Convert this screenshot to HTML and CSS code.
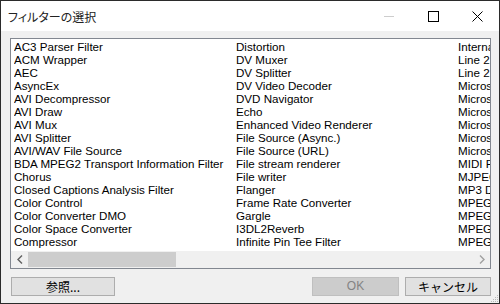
FILE: index.html
```html
<!DOCTYPE html>
<html lang="ja">
<head>
  <meta charset="UTF-8" />
  <title>フィルターの選択</title>
  <link rel="stylesheet" href="styles.css">
</head>
<body>

  <div class="window">
    <header class="titlebar">
      <span class="title">フィルターの選択</span>
      <div class="controls">
        <span class="ctl ctl-min"><i></i></span>
        <span class="ctl ctl-max"><i></i></span>
        <span class="ctl ctl-close">
          <svg width="11" height="11" viewBox="0 0 11 11">
            <path d="M0.5 0.5 L10.5 10.5 M10.5 0.5 L0.5 10.5" stroke="#000" stroke-width="1" fill="none" />
          </svg>
        </span>
      </div>
    </header>

    <main class="content">
      <div class="listbox">
        <div class="rows">
          <div class="col">
            <div>AC3 Parser Filter</div>
            <div>ACM Wrapper</div>
            <div>AEC</div>
            <div>AsyncEx</div>
            <div>AVI Decompressor</div>
            <div>AVI Draw</div>
            <div>AVI Mux</div>
            <div>AVI Splitter</div>
            <div>AVI/WAV File Source</div>
            <div>BDA MPEG2 Transport Information Filter</div>
            <div>Chorus</div>
            <div>Closed Captions Analysis Filter</div>
            <div>Color Control</div>
            <div>Color Converter DMO</div>
            <div>Color Space Converter</div>
            <div>Compressor</div>
          </div>
          <div class="col">
            <div>Distortion</div>
            <div>DV Muxer</div>
            <div>DV Splitter</div>
            <div>DV Video Decoder</div>
            <div>DVD Navigator</div>
            <div>Echo</div>
            <div>Enhanced Video Renderer</div>
            <div>File Source (Async.)</div>
            <div>File Source (URL)</div>
            <div>File stream renderer</div>
            <div>File writer</div>
            <div>Flanger</div>
            <div>Frame Rate Converter</div>
            <div>Gargle</div>
            <div>I3DL2Reverb</div>
            <div>Infinite Pin Tee Filter</div>
          </div>
          <div class="col col-last">
            <div>Internal Script Command Renderer</div>
            <div>Line 21 Decoder</div>
            <div>Line 21 Decoder 2</div>
            <div>Microsoft DTV-DVD Audio Decoder</div>
            <div>Microsoft DTV-DVD Video Decoder</div>
            <div>Microsoft MPEG-2 Audio Encoder</div>
            <div>Microsoft MPEG-2 Encoder</div>
            <div>Microsoft MPEG-2 Video Encoder</div>
            <div>Microsoft Screen Capture</div>
            <div>MIDI Parser</div>
            <div>MJPEG Decompressor</div>
            <div>MP3 Decoder DMO</div>
            <div>MPEG Audio Decoder</div>
            <div>MPEG Layer-3 Decoder</div>
            <div>MPEG-2 Demultiplexer</div>
            <div>MPEG-2 Splitter</div>
          </div>
        </div>

        <div class="hscroll">
          <span class="arrow">
            <svg width="6" height="9" viewBox="0 0 6 9">
              <path d="M5 0.5 L1 4.5 L5 8.5" stroke="#606060" stroke-width="1.4" fill="none" />
            </svg>
          </span>
          <div class="track">
            <div class="thumb"></div>
          </div>
          <span class="arrow">
            <svg width="6" height="9" viewBox="0 0 6 9">
              <path d="M1 0.5 L5 4.5 L1 8.5" stroke="#a0a0a0" stroke-width="1.4" fill="none" />
            </svg>
          </span>
        </div>
      </div>

      <div class="buttons">
        <button class="btn btn-browse">参照...</button>
        <span class="spacer"></span>
        <button class="btn btn-ok" disabled>OK</button>
        <button class="btn btn-cancel">キャンセル</button>
      </div>

      <svg class="grip" width="8" height="8" viewBox="0 0 8 8">
        <rect x="6" y="0" width="1" height="1" fill="#b8b8b8" />
        <rect x="4" y="2" width="1" height="1" fill="#b8b8b8" />
        <rect x="6" y="2" width="1" height="1" fill="#b8b8b8" />
        <rect x="2" y="4" width="1" height="1" fill="#b8b8b8" />
        <rect x="4" y="4" width="1" height="1" fill="#b8b8b8" />
        <rect x="6" y="4" width="1" height="1" fill="#b8b8b8" />
        <rect x="0" y="6" width="1" height="1" fill="#b8b8b8" />
        <rect x="2" y="6" width="1" height="1" fill="#b8b8b8" />
        <rect x="4" y="6" width="1" height="1" fill="#b8b8b8" />
        <rect x="6" y="6" width="1" height="1" fill="#b8b8b8" />
      </svg>
    </main>
  </div>

</body>
</html>
```

FILE: styles.css
```css
  * {
    box-sizing: border-box;
  }

  body {
    margin: 0;
    font-family: "Liberation Sans", "Noto Sans CJK JP", sans-serif;
    font-size: 12px;
    color: #000;
    background: #f0f0f0;
  }

  .window {
    width: 500px;
    height: 304px;
    border: 1px solid #2b2b2b;
    background: #f0f0f0;
    display: flex;
    flex-direction: column;
    overflow: hidden;
  }

  .titlebar {
    height: 30px;
    background: #fff;
    display: flex;
    align-items: center;
    flex-shrink: 0;
  }

  .title {
    padding-left: 7px;
    font-family: "Noto Sans CJK JP", sans-serif;
    font-feature-settings: "palt";
    font-size: 12px;
    color: #222;
    flex: 1;
  }

  .controls {
    display: flex;
    height: 30px;
  }

  .ctl {
    width: 44px;
    height: 30px;
    display: flex;
    align-items: center;
    justify-content: center;
  }

  .ctl-min i {
    width: 10px;
    height: 1px;
    background: #cdcdcd;
  }

  .ctl-max i {
    width: 11px;
    height: 11px;
    border: 1px solid #000;
  }

  .content {
    flex: 1;
    padding: 7px 8px 7px 9px;
    display: flex;
    flex-direction: column;
    position: relative;
  }

  .listbox {
    height: 231px;
    border: 1px solid #828790;
    background: #fff;
    display: flex;
    flex-direction: column;
    overflow: hidden;
  }

  .rows {
    flex: 1;
    display: flex;
    padding: 1px 0 0 3px;
    overflow: hidden;
    font-size: 11.6px;
  }

  .col {
    width: 222px;
    flex-shrink: 0;
    white-space: nowrap;
    overflow: hidden;
  }

  .col-last {
    width: 32px;
  }

  .col div {
    height: 13px;
    line-height: 13px;
  }

  .hscroll {
    height: 17px;
    display: flex;
    background: #f0f0f0;
    flex-shrink: 0;
  }

  .arrow {
    width: 17px;
    height: 17px;
    display: flex;
    align-items: center;
    justify-content: center;
  }

  .track {
    flex: 1;
    padding: 1px 0;
  }

  .thumb {
    width: 148px;
    height: 15px;
    background: #cdcdcd;
  }

  .buttons {
    display: flex;
    margin-top: 8px;
    padding-left: 1px;
    gap: 6px;
  }

  .spacer {
    flex: 1;
  }

  .btn {
    height: 19px;
    padding: 0;
    font-family: "Noto Sans CJK JP", sans-serif;
    font-size: 12px;
    line-height: 17px;
    background: #e1e1e1;
    border: 1px solid #adadad;
    color: #000;
  }

  .btn-browse {
    width: 104px;
  }

  .btn-ok {
    width: 87px;
    background: #cccccc;
    border-color: #bfbfbf;
    color: #838383;
    font-family: "Liberation Sans", sans-serif;
  }

  .btn-cancel {
    width: 86px;
  }

  .grip {
    position: absolute;
    right: 0;
    bottom: 0;
  }
```
